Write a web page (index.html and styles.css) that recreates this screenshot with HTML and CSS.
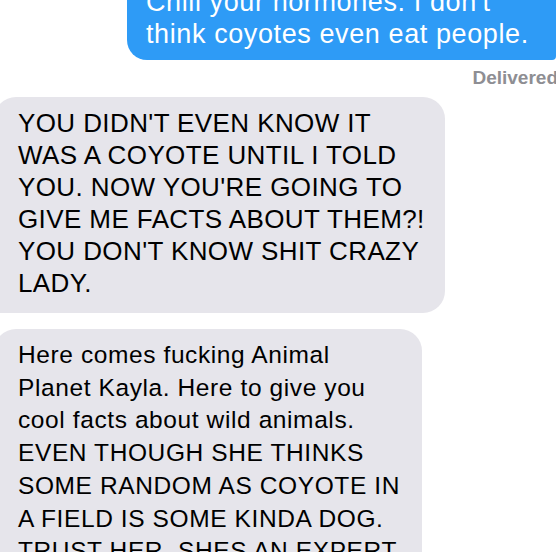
FILE: index.html
```html
<!DOCTYPE html>
<html lang="en">
<head>
<meta charset="UTF-8">
<meta name="viewport" content="width=device-width, initial-scale=1.0">
<title>messages</title>
<link rel="stylesheet" href="styles.css">
</head>
<body>
    <div class="thread">
        <div class="msg sent">Chill your hormones. I don't<br>think coyotes even eat people.</div>
        <div class="status">Delivered</div>
        <div class="msg received">YOU DIDN'T EVEN KNOW IT<br>WAS A COYOTE UNTIL I TOLD<br>YOU. NOW YOU'RE GOING TO<br>GIVE ME FACTS ABOUT THEM?!<br>YOU DON'T KNOW SHIT CRAZY<br>LADY.</div>
        <div class="msg received later">Here comes fucking Animal<br>Planet Kayla. Here to give you<br>cool facts about wild animals.<br>EVEN THOUGH SHE THINKS<br>SOME RANDOM AS COYOTE IN<br>A FIELD IS SOME KINDA DOG.<br>TRUST HER. SHES AN EXPERT.</div>
    </div>
</body>
</html>
```

FILE: styles.css
```css
body {
    margin: 0;
    padding: 0;
    background-color: #ffffff;
    font-family: "Liberation Sans", Arial, sans-serif;
    overflow: hidden;
}
.thread {
    display: flex;
    flex-direction: column;
    margin-top: -22px;
}
.msg {
    font-size: 26px;
    line-height: 32px;
    letter-spacing: 0.4px;
}
.sent {
    margin-left: 127px;
    background-color: #2e9bf6;
    color: #ffffff;
    font-size: 27px;
    letter-spacing: 0.6px;
    padding: 8px 0 10px 19px;
    border-radius: 20px 4px 4px 20px;
}
.status {
    align-self: flex-end;
    margin-top: 7px;
    margin-right: -2px;
    font-size: 19px;
    font-weight: bold;
    color: #8e8e93;
}
.received {
    width: fit-content;
    margin-left: -6px;
    margin-top: 8px;
    background-color: #e6e5eb;
    color: #000000;
    padding: 10px 20px 14px 24px;
    border-radius: 22px 22px 22px 0;
}
.received + .received {
    margin-top: 16px;
}
/* second bubble was captured a bit smaller */
.later {
    font-size: 24.5px;
    line-height: 32.7px;
    letter-spacing: 0.6px;
}
```
